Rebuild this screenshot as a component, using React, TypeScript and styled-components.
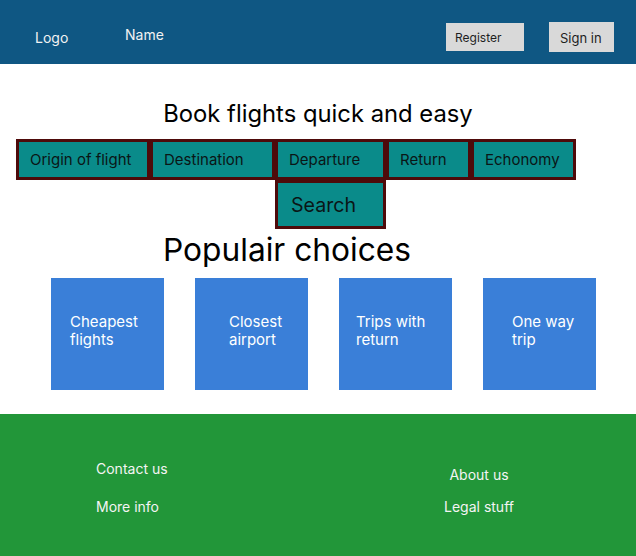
import React from "react";
import styled, { createGlobalStyle } from "styled-components";

const Global = createGlobalStyle`
  html, body { margin: 0; padding: 0; background: #ffffff; }
  body { font-family: Inter, "Noto Sans", "Liberation Sans", sans-serif; }
  * { box-sizing: border-box; }
`;

const Page = styled.div`
  width: 636px;
  min-height: 556px;
  display: flex;
  flex-direction: column;
`;

const Header = styled.header`
  height: 64px;
  background: #0f5783;
  display: flex;
  align-items: flex-start;
  padding: 0 22px 0 35px;
`;

const NavText = styled.div<{ $top: number; $width?: number }>`
  margin-top: ${(p) => p.$top}px;
  width: ${(p) => (p.$width ? `${p.$width}px` : "auto")};
  font-size: 14px;
  line-height: 17px;
  color: #f2f2f2;
`;

const Spacer = styled.div`
  flex: 1;
`;

const HeaderButton = styled.button<{ $top: number; $w: number; $h: number; $size: number; $padTop?: number }>`
  margin-top: ${(p) => p.$top}px;
  width: ${(p) => p.$w}px;
  height: ${(p) => p.$h}px;
  padding: ${(p) => p.$padTop ?? 0}px 0 0 ${(p) => (p.$size === 12 ? 9 : 11)}px;
  border: none;
  background: #d9d9d9;
  font-family: inherit;
  font-size: ${(p) => p.$size}px;
  color: #1e1e1e;
  text-align: left;
  display: flex;
  align-items: center;
  & + & {
    margin-left: 25px;
  }
`;

const Main = styled.main`
  padding: 35px 0 24px;
  display: flex;
  flex-direction: column;
`;

const Title = styled.h1`
  margin: 0 0 11px;
  font-size: 23.8px;
  line-height: 29px;
  font-weight: 400;
  text-align: center;
  color: #000;
`;

const Form = styled.div`
  margin-left: 16px;
  display: grid;
  grid-template-columns: 134px 125px 111px 85px 105px;
  grid-template-rows: 41px 49px;
`;

const Field = styled.div<{ $big?: boolean; $col?: number }>`
  grid-column: ${(p) => p.$col ?? "auto"};
  border: 3px solid #4e0a0a;
  background: #0a8b8a;
  display: flex;
  align-items: center;
  padding-left: ${(p) => (p.$big ? 13 : 11)}px;
  padding-bottom: ${(p) => (p.$big ? 0 : 1)}px;
  font-size: ${(p) => (p.$big ? 19.6 : 15)}px;
  color: #0a1616;
`;

const SubTitle = styled.h2`
  margin: 1px 0 9px 163px;
  font-size: 31.7px;
  line-height: 39px;
  font-weight: 400;
  color: #000;
`;

const Cards = styled.div`
  margin-left: 51px;
  display: flex;
  gap: 31px;
`;

const Card = styled.div<{ $pad: number }>`
  width: 113px;
  height: 112px;
  background: #3a7fd8;
  padding: 35px 0 0 ${(p) => p.$pad}px;
  color: #ffffff;
  font-size: 15px;
  line-height: 18px;
`;

const Footer = styled.footer`
  height: 142px;
  background: #229639;
  display: flex;
  padding: 46px 0 0 96px;
`;

const FooterCol = styled.div<{ $width: number; $gap: number; $top: number; $center?: boolean }>`
  width: ${(p) => p.$width}px;
  margin-top: ${(p) => p.$top}px;
  display: flex;
  flex-direction: column;
  gap: ${(p) => p.$gap}px;
  align-items: ${(p) => (p.$center ? "center" : "flex-start")};
`;

const FooterLink = styled.div`
  font-size: 14px;
  line-height: 18px;
  color: #f4f4f4;
`;

const cards = [
  { pad: 19, lines: ["Cheapest", "flights"] },
  { pad: 34, lines: ["Closest", "airport"] },
  { pad: 17, lines: ["Trips with", "return"] },
  { pad: 29, lines: ["One way", "trip"] },
];

export default function App() {
  return (
    <Page>
      <Global />
      <Header>
        <NavText $top={29} $width={90}>Logo</NavText>
        <NavText $top={26}>Name</NavText>
        <Spacer />
        <HeaderButton $top={23} $w={78} $h={28} $size={12}>Register</HeaderButton>
        <HeaderButton $top={22} $w={65} $h={30} $size={13} $padTop={2}>Sign in</HeaderButton>
      </Header>
      <Main>
        <Title>Book flights quick and easy</Title>
        <Form>
          <Field>Origin of flight</Field>
          <Field>Destination</Field>
          <Field>Departure</Field>
          <Field>Return</Field>
          <Field>Echonomy</Field>
          <Field $big $col={3}>Search</Field>
        </Form>
        <SubTitle>Populair choices</SubTitle>
        <Cards>
          {cards.map((c) => (
            <Card key={c.lines[0]} $pad={c.pad}>
              {c.lines[0]}
              <br />
              {c.lines[1]}
            </Card>
          ))}
        </Cards>
      </Main>
      <Footer>
        <FooterCol $width={333} $gap={20} $top={0}>
          <FooterLink>Contact us</FooterLink>
          <FooterLink>More info</FooterLink>
        </FooterCol>
        <FooterCol $width={100} $gap={14} $top={6} $center>
          <FooterLink>About us</FooterLink>
          <FooterLink>Legal stuff</FooterLink>
        </FooterCol>
      </Footer>
    </Page>
  );
}
